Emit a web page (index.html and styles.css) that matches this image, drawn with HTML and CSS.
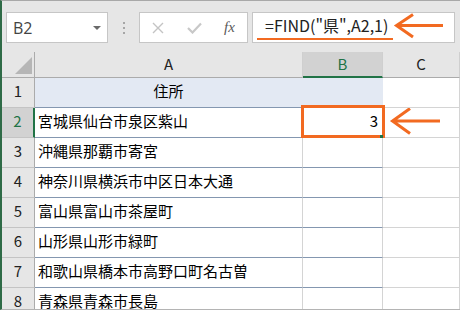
FILE: index.html
```html
<!DOCTYPE html>
<html lang="ja">
<head>
  <meta charset="utf-8">
  <title>FIND関数</title>
  <link rel="stylesheet" href="styles.css">
</head>
<body>
  <div class="window">
    <!-- name box + formula bar -->
    <div class="toolbar">
      <div class="name-box">B2<span class="caret"></span></div>
      <div class="grip"><i></i><i></i><i></i></div>
      <div class="fx-buttons">
        <svg class="btn-cancel" width="12" height="12" viewBox="0 0 12 12"><path d="M1 1L11 11M11 1L1 11"/></svg>
        <svg class="btn-enter" width="15" height="12" viewBox="0 0 15 12"><path d="M1 6L5.5 10.5L14 1.5"/></svg>
        <span class="fx">fx</span>
      </div>
      <div class="formula-input">
        <span class="formula">=FIND("県",A2,1)</span>
        <svg class="arrow" width="52" height="29" viewBox="0 0 52 29"><path d="M3 12.5H50M20 1.5L3.5 12.5L20 24"/></svg>
      </div>
    </div>

    <!-- worksheet -->
    <div class="sheet">
      <div class="corner"><span class="tri"></span></div>
      <div class="col-head">A</div>
      <div class="col-head picked">B</div>
      <div class="col-head">C</div>

      <div class="row-head">1</div>
      <div class="cell ruled title">住所</div>
      <div class="cell ruled title"></div>
      <div class="cell"></div>

      <div class="row-head picked">2</div>
      <div class="cell ruled">宮城県仙台市泉区紫山</div>
      <div class="cell ruled num">3<span class="pick"></span><span class="handle"></span></div>
      <div class="cell">
        <svg class="arrow" width="52" height="29" viewBox="0 0 52 29"><path d="M3 13H51M21 0.5L3.5 13L21 25.5"/></svg>
      </div>

      <div class="row-head">3</div>
      <div class="cell ruled">沖縄県那覇市寄宮</div>
      <div class="cell ruled"></div>
      <div class="cell"></div>

      <div class="row-head">4</div>
      <div class="cell ruled">神奈川県横浜市中区日本大通</div>
      <div class="cell ruled"></div>
      <div class="cell"></div>

      <div class="row-head">5</div>
      <div class="cell ruled">富山県富山市茶屋町</div>
      <div class="cell ruled"></div>
      <div class="cell"></div>

      <div class="row-head">6</div>
      <div class="cell ruled">山形県山形市緑町</div>
      <div class="cell ruled"></div>
      <div class="cell"></div>

      <div class="row-head">7</div>
      <div class="cell ruled">和歌山県橋本市高野口町名古曽</div>
      <div class="cell ruled"></div>
      <div class="cell"></div>

      <div class="row-head">8</div>
      <div class="cell ruled">青森県青森市長島</div>
      <div class="cell ruled"></div>
      <div class="cell"></div>
    </div>
  </div>
</body>
</html>
```

FILE: styles.css
```css
body {
  margin: 0;
  font-family: "Noto Sans CJK JP", "Noto Sans", sans-serif;
}

.window {
  width: 460px;
  height: 310px;
  box-sizing: border-box;
  border-top: 1px solid #a8a8a8;
  border-left: 2px solid #2f6b47;
  border-bottom: 1px solid #b4b4b4;
  background-color: #e6e6e6;
  overflow: hidden;
}

/* ---------- formula bar ---------- */

.toolbar {
  display: flex;
  align-items: flex-start;
  height: 51px;
  box-sizing: border-box;
  padding: 11px 0 0 4px;
}

.name-box {
  width: 102px;
  height: 31px;
  box-sizing: border-box;
  border: 1px solid #c6c6c6;
  background-color: #fff;
  display: flex;
  align-items: center;
  justify-content: space-between;
  padding: 0 6px;
  font-family: "Open Sans", sans-serif;
  font-size: 16px;
  color: #444;
}

.caret {
  width: 0;
  height: 0;
  border-left: 4px solid transparent;
  border-right: 4px solid transparent;
  border-top: 4px solid #6a6a6a;
}

.grip {
  display: flex;
  flex-direction: column;
  gap: 3px;
  margin: 10px 0 0 15px;
}

.grip i {
  width: 2px;
  height: 2px;
  background-color: #a6a6a6;
}

.fx-buttons {
  width: 109px;
  height: 31px;
  box-sizing: border-box;
  margin-left: 14px;
  border: 1px solid #c6c6c6;
  background-color: #fff;
  display: flex;
  align-items: center;
}

.btn-cancel {
  margin-left: 12px;
  fill: none;
  stroke: #c4c4c4;
  stroke-width: 1.4;
}

.btn-enter {
  margin-left: 23px;
  fill: none;
  stroke: #c8c8c8;
  stroke-width: 2.2;
}

.fx {
  margin-left: 22px;
  font-family: "Liberation Serif", serif;
  font-style: italic;
  font-size: 15px;
  color: #5a5a5a;
}

.formula-input {
  width: 203px;
  height: 31px;
  box-sizing: border-box;
  margin-left: 4px;
  border: 1px solid #c6c6c6;
  background-color: #fff;
  display: flex;
  align-items: flex-start;
  padding-left: 4px;
}

.formula {
  width: 136px;
  height: 27px;
  box-sizing: border-box;
  display: flex;
  align-items: center;
  padding: 0 0 1px 8px;
  border-bottom: 2px solid #f26a21;
  font-size: 16px;
  color: #222;
  white-space: nowrap;
}

.arrow {
  fill: none;
  stroke: #f26a21;
  stroke-width: 3;
}

/* ---------- worksheet grid ---------- */

.sheet {
  display: grid;
  grid-template-columns: 33px 268px 80px 77px;
  grid-template-rows: 26px repeat(8, 30px);
}

.sheet > div {
  box-sizing: border-box;
  border-right: 1px solid #d4d4d4;
  border-bottom: 1px solid #d4d4d4;
}

.corner {
  display: flex;
  align-items: flex-end;
  justify-content: flex-end;
  padding: 0 2px 3px 0;
  border-right-color: #ababab !important;
  border-bottom-color: #ababab !important;
}

.tri {
  width: 17px;
  height: 17px;
  background-color: #b6b6b6;
  clip-path: polygon(100% 0, 100% 100%, 0 100%);
}

.col-head {
  display: flex;
  align-items: center;
  justify-content: center;
  padding-bottom: 2px;
  font-size: 15px;
  color: #222;
  border-right-color: #cfcfcf !important;
  border-bottom-color: #ababab !important;
}

.col-head.picked {
  background-color: #d2d2d2;
  color: #217346;
  border-bottom: 2px solid #217346 !important;
}

.row-head {
  display: flex;
  align-items: center;
  justify-content: center;
  padding-bottom: 4px;
  font-size: 15px;
  color: #222;
  border-right-color: #ababab !important;
  border-bottom-color: #c4c4c4 !important;
}

.row-head.picked {
  background-color: #d2d2d2;
  color: #217346;
  border-right: 2px solid #217346 !important;
}

.cell {
  background-color: #fff;
  display: flex;
  align-items: center;
  padding: 0 0 4px 3px;
  font-size: 15px;
  color: #000;
  white-space: nowrap;
}

.cell .arrow {
  margin: 4px 0 0 3px;
}

.sheet > .cell.ruled {
  border-bottom-color: #8497b0;
}

.sheet > .cell.title {
  background-color: #e3e9f3;
  border-right-color: #e3e9f3;
  justify-content: center;
  padding-left: 0;
}

.num {
  position: relative;
  justify-content: flex-end;
  padding-right: 4px;
}

/* orange frame drawn over the active cell */
.pick {
  position: absolute;
  top: -3px;
  left: -2px;
  right: -3px;
  bottom: -1px;
  border: 3px solid #f26a21;
}

.handle {
  position: absolute;
  right: -1px;
  bottom: -1px;
  width: 3px;
  height: 3px;
  background-color: #217346;
}
```
